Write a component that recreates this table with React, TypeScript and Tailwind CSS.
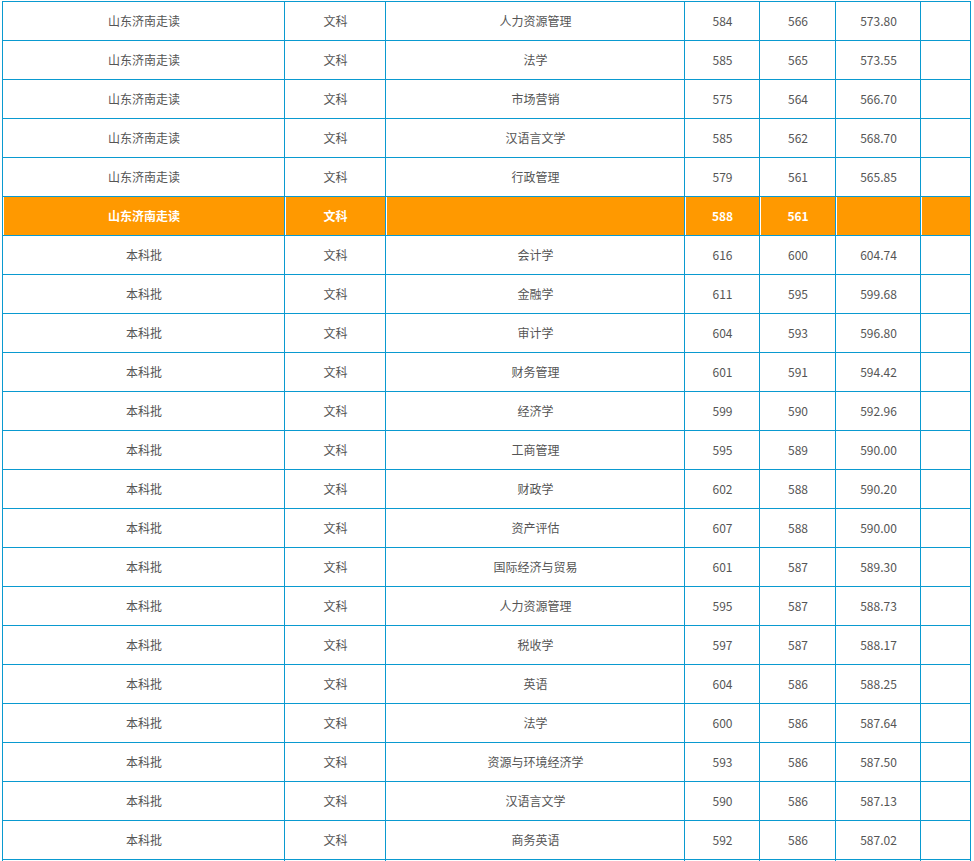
import React from 'react';

type Row = { batch: string; subject: string; major: string; max: string; min: string; avg: string; hl?: boolean };

const rows: Row[] = [
  { batch: '山东济南走读', subject: '文科', major: '人力资源管理', max: '584', min: '566', avg: '573.80' },
  { batch: '山东济南走读', subject: '文科', major: '法学', max: '585', min: '565', avg: '573.55' },
  { batch: '山东济南走读', subject: '文科', major: '市场营销', max: '575', min: '564', avg: '566.70' },
  { batch: '山东济南走读', subject: '文科', major: '汉语言文学', max: '585', min: '562', avg: '568.70' },
  { batch: '山东济南走读', subject: '文科', major: '行政管理', max: '579', min: '561', avg: '565.85' },
  { batch: '山东济南走读', subject: '文科', major: '', max: '588', min: '561', avg: '', hl: true },
  { batch: '本科批', subject: '文科', major: '会计学', max: '616', min: '600', avg: '604.74' },
  { batch: '本科批', subject: '文科', major: '金融学', max: '611', min: '595', avg: '599.68' },
  { batch: '本科批', subject: '文科', major: '审计学', max: '604', min: '593', avg: '596.80' },
  { batch: '本科批', subject: '文科', major: '财务管理', max: '601', min: '591', avg: '594.42' },
  { batch: '本科批', subject: '文科', major: '经济学', max: '599', min: '590', avg: '592.96' },
  { batch: '本科批', subject: '文科', major: '工商管理', max: '595', min: '589', avg: '590.00' },
  { batch: '本科批', subject: '文科', major: '财政学', max: '602', min: '588', avg: '590.20' },
  { batch: '本科批', subject: '文科', major: '资产评估', max: '607', min: '588', avg: '590.00' },
  { batch: '本科批', subject: '文科', major: '国际经济与贸易', max: '601', min: '587', avg: '589.30' },
  { batch: '本科批', subject: '文科', major: '人力资源管理', max: '595', min: '587', avg: '588.73' },
  { batch: '本科批', subject: '文科', major: '税收学', max: '597', min: '587', avg: '588.17' },
  { batch: '本科批', subject: '文科', major: '英语', max: '604', min: '586', avg: '588.25' },
  { batch: '本科批', subject: '文科', major: '法学', max: '600', min: '586', avg: '587.64' },
  { batch: '本科批', subject: '文科', major: '资源与环境经济学', max: '593', min: '586', avg: '587.50' },
  { batch: '本科批', subject: '文科', major: '汉语言文学', max: '590', min: '586', avg: '587.13' },
  { batch: '本科批', subject: '文科', major: '商务英语', max: '592', min: '586', avg: '587.02' },
  { batch: '', subject: '', major: '', max: '', min: '', avg: '' },
];

const widths = ['w-[282px]', 'w-[101px]', 'w-[299px]', 'w-[75px]', 'w-[76px]', 'w-[85px]', 'w-[51px] border-r'];

const Cell: React.FC<{ w: string; hl?: boolean; children?: React.ReactNode }> = ({ w, hl, children }) => (
  <div className={`${w} shrink-0 border-l border-[#0a9ad0] h-full`}>
    <div
      className={`ml-px h-full flex items-center justify-center ${
        hl ? 'bg-[#ff9900] text-white font-bold' : 'bg-white text-[#555]'
      }`}
    >
      {children}
    </div>
  </div>
);

export default function App() {
  return (
    <div
      className="bg-white w-[974px] h-[861px] overflow-hidden pt-px pl-[2px] text-[12px]"
      style={{ fontFamily: '"Noto Sans CJK SC", "Noto Sans", sans-serif' }}
    >
      <div className="w-[969px]">
        {rows.map((r, i) => (
          <div key={i} className="flex h-[39px] border-t border-[#0a9ad0]">
            {[r.batch, r.subject, r.major, r.max, r.min, r.avg, ''].map((v, j) => (
              <Cell key={j} w={widths[j]} hl={r.hl}>
                {v}
              </Cell>
            ))}
          </div>
        ))}
      </div>
    </div>
  );
}
